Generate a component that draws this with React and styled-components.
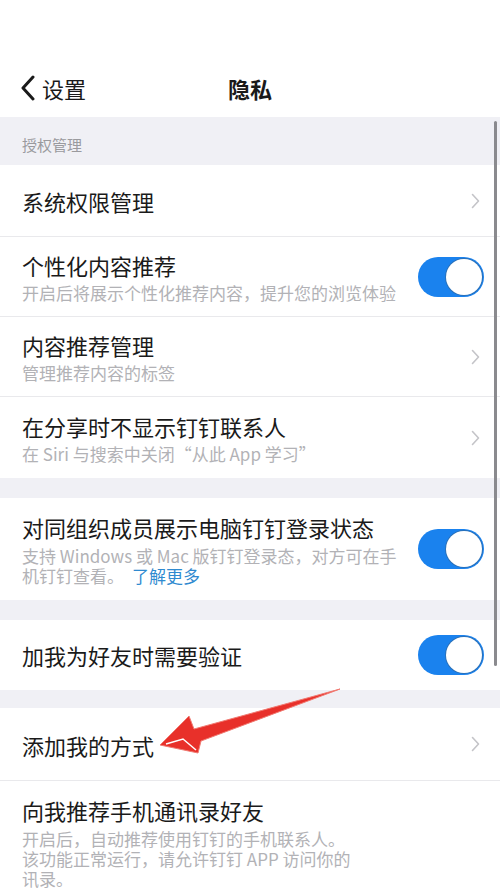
import React from 'react'
import styled, { createGlobalStyle } from 'styled-components'

const GlobalStyle = createGlobalStyle`
  body {
    margin: 0;
    background: #ffffff;
    font-family: "Noto Sans CJK SC", "Noto Sans", sans-serif;
  }
`

const Page = styled.div`
  position: relative;
  width: 500px;
  height: 888px;
  overflow: hidden;
  background: #f0f0f5;
`

const Header = styled.header`
  height: 117px;
  padding-top: 58px;
  box-sizing: border-box;
  background: #ffffff;
  display: grid;
  grid-template-columns: 1fr auto 1fr;
  align-items: center;
`

const Back = styled.div`
  display: flex;
  align-items: center;
  gap: 6px;
  padding-left: 20px;
  font-size: 22px;
  color: #1a1a1a;
  svg {
    width: 16px;
    height: 26px;
  }
`

const Title = styled.div`
  font-size: 22px;
  font-weight: 700;
  color: #1a1a1a;
`

const SectionLabel = styled.div`
  height: 48px;
  padding: 6px 0 0 22px;
  box-sizing: border-box;
  display: flex;
  align-items: center;
  font-size: 15px;
  color: #9a9a9e;
`

const Gap = styled.div`
  height: ${(p) => p.h}px;
`

const Group = styled.div`
  background: #ffffff;
`

const Row = styled.div`
  position: relative;
  height: ${(p) => p.h}px;
  padding: ${(p) => p.pad || '0'} 15px 0 22px;
  box-sizing: border-box;
  display: flex;
  align-items: ${(p) => (p.pad ? 'flex-start' : 'center')};
  justify-content: space-between;
  border-top: ${(p) => (p.first ? 'none' : '1px solid #e9e9ec')};
`

const Texts = styled.div`
  display: flex;
  flex-direction: column;
  padding-top: ${(p) => p.shift || 0}px;
`

const Name = styled.div`
  font-size: 22px;
  line-height: 28px;
  color: #1a1a1a;
`

const Desc = styled.div`
  margin-top: ${(p) => p.mt || 4}px;
  font-size: 17px;
  line-height: 20px;
  color: #b2b2b6;
  white-space: pre-line;
`

const More = styled.span`
  color: #2f8ad0;
  margin-left: 8px;
`

const Chevron = styled.svg`
  width: 9px;
  height: 16px;
  margin-right: 5px;
  flex-shrink: 0;
`

const Track = styled.div`
  width: 66px;
  height: 40px;
  border-radius: 20px;
  background: #1a82ee;
  flex-shrink: 0;
  position: relative;
  margin-right: 1px;
`

const Knob = styled.div`
  position: absolute;
  right: 2px;
  top: 2px;
  width: 36px;
  height: 36px;
  border-radius: 50%;
  background: #ffffff;
  box-shadow: 0 0 0 1px #2a70b8;
`

const ScrollBar = styled.div`
  position: absolute;
  right: 3px;
  top: 121px;
  width: 3px;
  height: 545px;
  border-radius: 2px;
  background: #8a8a8e;
`

const ArrowLayer = styled.svg`
  position: absolute;
  left: 0;
  top: 0;
  width: 500px;
  height: 888px;
  pointer-events: none;
`

const RightChevron = () => (
  <Chevron viewBox="0 0 9 16">
    <path d="M1.5 1.5 L7.5 8 L1.5 14.5" fill="none" stroke="#c4c4c8" strokeWidth="1.6" strokeLinecap="round" strokeLinejoin="round" />
  </Chevron>
)

const Toggle = () => (
  <Track>
    <Knob />
  </Track>
)

const App = () => {
  return (
    <Page>
      <GlobalStyle />
      <Header>
        <Back>
          <svg viewBox="0 0 16 26">
            <path d="M13 2 L3 13 L13 24" fill="none" stroke="#1a1a1a" strokeWidth="3" strokeLinecap="round" strokeLinejoin="round" />
          </svg>
          设置
        </Back>
        <Title>隐私</Title>
        <div />
      </Header>

      <SectionLabel>授权管理</SectionLabel>
      <Group>
        <Row h={71} first>
          <Texts shift={0}>
            <Name>系统权限管理</Name>
          </Texts>
          <RightChevron />
        </Row>
        <Row h={80}>
          <Texts shift={1}>
            <Name>个性化内容推荐</Name>
            <Desc>开启后将展示个性化推荐内容，提升您的浏览体验</Desc>
          </Texts>
          <Toggle />
        </Row>
        <Row h={80}>
          <Texts shift={1}>
            <Name>内容推荐管理</Name>
            <Desc>管理推荐内容的标签</Desc>
          </Texts>
          <RightChevron />
        </Row>
        <Row h={82}>
          <Texts shift={0}>
            <Name>在分享时不显示钉钉联系人</Name>
            <Desc>在 Siri 与搜索中关闭“从此 App 学习”</Desc>
          </Texts>
          <RightChevron />
        </Row>
      </Group>

      <Gap h={20} />
      <Group>
        <Row h={102} first>
          <Texts shift={0}>
            <Name>对同组织成员展示电脑钉钉登录状态</Name>
            <Desc mt={5}>
              {'支持 Windows 或 Mac 版钉钉登录态，对方可在手\n机钉钉查看。'}
              <More>了解更多</More>
            </Desc>
          </Texts>
          <Toggle />
        </Row>
      </Group>

      <Gap h={20} />
      <Group>
        <Row h={70} first>
          <Texts shift={0}>
            <Name>加我为好友时需要验证</Name>
          </Texts>
          <Toggle />
        </Row>
      </Group>

      <Gap h={18} />
      <Group>
        <Row h={72} first>
          <Texts shift={2}>
            <Name>添加我的方式</Name>
          </Texts>
          <RightChevron />
        </Row>
        <Row h={120} pad="15px">
          <Texts>
            <Name>向我推荐手机通讯录好友</Name>
            <Desc mt={5}>
              {'开启后，自动推荐使用钉钉的手机联系人。\n该功能正常运行，请允许钉钉 APP 访问你的\n讯录。'}
            </Desc>
          </Texts>
        </Row>
      </Group>

      <ScrollBar />
      <ArrowLayer viewBox="0 0 500 888">
        <polygon
          points="160,745 189,716 194,729 340,689 201,741 198,753"
          fill="#e8302a"
          stroke="#f07a72"
          strokeWidth="1"
          strokeLinejoin="round"
        />
        <path d="M166,744 L183,739 L196,750" fill="none" stroke="#ffffff" strokeWidth="1.5" />
      </ArrowLayer>
    </Page>
  )
}

export default App
